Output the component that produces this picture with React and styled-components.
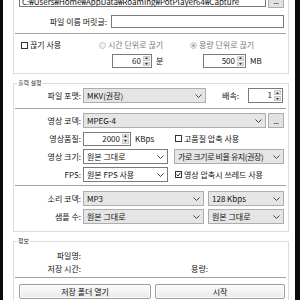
import React from 'react';
import styled, { createGlobalStyle } from 'styled-components';

const GlobalStyle = createGlobalStyle`
  *, *::before, *::after { box-sizing: border-box; }
  html, body { margin: 0; padding: 0; }
  body {
    width: 300px;
    height: 300px;
    overflow: hidden;
    background: #0b0b0b;
    font-family: "Noto Sans CJK KR", "Noto Sans", sans-serif;
    font-size: 8px;
    color: #111;
  }
`;

const Window = styled.div`
  margin-left: 3px;
  width: 292px;
  height: 300px;
  overflow: hidden;
  background: #fff;
  padding-left: 10px;
  display: flex;
  flex-direction: column;
  gap: 9px;
`;

const Group = styled.section`
  position: relative;
  flex: none;
  width: 276px;
  border: 1px solid #dcdcdc;
  padding: ${p => p.$pad};
  margin-top: ${p => p.$mt || 0}px;
  display: flex;
  flex-direction: column;
`;

const GroupTitle = styled.span`
  position: absolute;
  left: 3px;
  top: -6px;
  height: 10px;
  line-height: 10px;
  padding: 0 1px;
  background: #fff;
  font-size: 6px;
  color: #222;
`;

const Row = styled.div`
  flex: none;
  display: flex;
  align-items: center;
  height: ${p => p.$h || 15}px;
  margin-top: ${p => p.$mt || 0}px;
  padding-left: ${p => p.$pl || 0}px;
`;

const OptionGrid = styled.div`
  flex: none;
  display: grid;
  grid-template-columns: 78px 91px 1fr;
  align-items: center;
  height: ${p => p.$h}px;
  margin-top: ${p => p.$mt || 0}px;
  padding-left: 7px;
`;

const Cell = styled.div`
  grid-column: ${p => p.$col};
  display: flex;
  align-items: center;
`;

const Sep = styled.div`
  flex: none;
  height: 1px;
  background: #a0a0a0;
  margin: ${p => p.$mt}px 2px 0 1px;
`;

const Label = styled.span`
  flex: none;
  width: ${p => p.$w}px;
  padding-right: ${p => p.$pr ?? 2}px;
  text-align: right;
  white-space: nowrap;
  line-height: 12px;
`;

const Unit = styled.span`
  flex: none;
  width: ${p => (p.$w ? `${p.$w}px` : 'auto')};
  padding-left: ${p => p.$pl ?? 4}px;
  white-space: nowrap;
  line-height: 12px;
`;

const TextBox = styled.div`
  flex: none;
  width: ${p => p.$w}px;
  height: ${p => p.$h}px;
  border: 1px solid #7a7a7a;
  background: #fff;
  padding: ${p => p.$pt || 0}px 2px 0 2px;
  line-height: ${p => p.$h - 2}px;
  white-space: nowrap;
  overflow: hidden;
`;

const SmallButton = styled.div`
  flex: none;
  width: 16px;
  height: ${p => p.$h}px;
  margin-left: 2px;
  border: 1px solid #adadad;
  background: #e1e1e1;
  display: flex;
  align-items: flex-end;
  justify-content: center;
  font-size: 8px;
  line-height: 8px;
  padding-bottom: 2px;
  letter-spacing: -0.5px;
  color: #222;
`;

const ComboBox = styled.div`
  flex: none;
  display: flex;
  align-items: center;
  width: ${p => p.$w}px;
  height: 15px;
  margin-left: ${p => p.$ml || 0}px;
  border: 1px solid ${p => (p.$white ? '#7a7a7a' : '#adadad')};
  background: ${p => (p.$white ? '#fff' : '#e5e5e5')};
  padding: 0 3px;
`;

const ComboText = styled.span`
  flex: 1;
  min-width: 0;
  white-space: nowrap;
  overflow: hidden;
  line-height: 13px;
  letter-spacing: ${p => p.$ls || 0}px;
`;

const SpinBox = styled.div`
  flex: none;
  display: flex;
  width: ${p => p.$w}px;
  height: ${p => p.$h || 14}px;
  margin-left: ${p => p.$ml || 0}px;
  border: 1px solid #7a7a7a;
  background: #fff;
`;

const SpinValue = styled.span`
  flex: 1;
  text-align: right;
  padding-right: 2px;
  line-height: 12px;
  color: #222;
`;

const SpinArrows = styled.div`
  flex: none;
  width: 8px;
  display: flex;
  flex-direction: column;
  gap: 1px;
  padding: 1px 1px 1px 0;
`;

const SpinArrow = styled.span`
  flex: 1;
  background: #e3e3e3;
  border: 1px solid #c9c9c9;
  display: flex;
  align-items: center;
  justify-content: center;
`;

const CheckItem = styled.span`
  flex: none;
  display: flex;
  align-items: center;
  gap: 2px;
  margin-left: ${p => p.$ml || 0}px;
  white-space: nowrap;
  line-height: 10px;
  color: ${p => (p.$disabled ? '#7a7a7a' : '#111')};
`;

const CheckSquare = styled.span`
  flex: none;
  width: 7px;
  height: 7px;
  border: 1px solid #333;
  background: #fff;
  display: flex;
  align-items: center;
  justify-content: center;
`;

const RadioCircle = styled.span`
  flex: none;
  width: 7px;
  height: 7px;
  border-radius: 50%;
  border: 1px solid #c2c2c2;
  background: #f4f4f4;
  display: flex;
  align-items: center;
  justify-content: center;
  &::after {
    content: '';
    display: ${p => (p.$on ? 'block' : 'none')};
    width: 3px;
    height: 3px;
    border-radius: 50%;
    background: #a9a9a9;
  }
`;

const PushButton = styled.div`
  flex: none;
  width: ${p => p.$w}px;
  height: 15px;
  margin-left: ${p => p.$ml || 0}px;
  border: 1px solid #9c9c9c;
  border-radius: 2px;
  background: linear-gradient(#fbfbfb, #e9e9e9);
  box-shadow: inset 0 0 0 1px #fdfdfd;
  display: flex;
  align-items: center;
  justify-content: center;
  line-height: 13px;
  color: #111;
`;

const Chevron = () => (
  <svg width="7" height="4" viewBox="0 0 7 4">
    <path d="M0.5 0.5 L3.5 3.5 L6.5 0.5" fill="none" stroke="#444" strokeWidth="1" />
  </svg>
);

const Tri = ({ up }) => (
  <svg width="3" height="2" viewBox="0 0 3 2">
    <path d={up ? 'M0 2 L1.5 0 L3 2 Z' : 'M0 0 L1.5 2 L3 0 Z'} fill="#333" />
  </svg>
);

const Combo = ({ w, ml, white, ls, children }) => (
  <ComboBox $w={w} $ml={ml} $white={white}>
    <ComboText $ls={ls}>{children}</ComboText>
    <Chevron />
  </ComboBox>
);

const Spinner = ({ w, ml, h, children }) => (
  <SpinBox $w={w} $ml={ml} $h={h}>
    <SpinValue>{children}</SpinValue>
    <SpinArrows>
      <SpinArrow><Tri up /></SpinArrow>
      <SpinArrow><Tri /></SpinArrow>
    </SpinArrows>
  </SpinBox>
);

const CheckMark = () => (
  <svg width="5" height="5" viewBox="0 0 5 5">
    <path d="M0.5 2.5 L2 4 L4.5 0.8" fill="none" stroke="#222" strokeWidth="1" />
  </svg>
);

const Check = ({ checked, ml, children }) => (
  <CheckItem $ml={ml}>
    <CheckSquare>{checked && <CheckMark />}</CheckSquare>
    {children}
  </CheckItem>
);

const Radio = ({ on, children }) => (
  <CheckItem $disabled>
    <RadioCircle $on={on} />
    {children}
  </CheckItem>
);

export default function App() {
  return (
    <>
      <GlobalStyle />
      <Window>
        <Group $mt={-12} $pad="4px 0 5px 0">
          <Row $h={14} $pl={5}>
            <TextBox $w={247} $h={14} $pt={2}>C:₩Users₩Home₩AppData₩Roaming₩PotPlayer64₩Capture</TextBox>
            <SmallButton $h={15}>...</SmallButton>
          </Row>
          <Row $h={13} $mt={8} $pl={5}>
            <Label $w={92} $pr={4}>파일 이름 머릿글:</Label>
            <TextBox $w={173} $h={13} />
          </Row>
          <Sep $mt={5} />
          <OptionGrid $h={10} $mt={6}>
            <Cell $col={1}><Check>끊기 사용</Check></Cell>
            <Cell $col={2}><Radio>시간 단위로 끊기</Radio></Cell>
            <Cell $col={3}><Radio on>용량 단위로 끊기</Radio></Cell>
          </OptionGrid>
          <OptionGrid $h={14} $mt={4}>
            <Cell $col={2}><Spinner w={40} ml={13}>60</Spinner><Unit>분</Unit></Cell>
            <Cell $col={3}><Spinner w={43} ml={13}>500</Spinner><Unit>MB</Unit></Cell>
          </OptionGrid>
        </Group>

        <Group $pad="4px 0 7px 0">
          <GroupTitle>출력 설정</GroupTitle>
          <Row>
            <Label $w={69}>파일 포맷:</Label>
            <Combo w={123}>MKV(권장)</Combo>
            <Label $w={42} $pr={9}>배속:</Label>
            <Spinner w={35} h={15}>1</Spinner>
          </Row>
          <Sep $mt={5} />
          <Row $mt={4}>
            <Label $w={69}>영상 코덱:</Label>
            <Combo w={183}>MPEG-4</Combo>
            <SmallButton $h={15}>...</SmallButton>
          </Row>
          <Row $mt={3}>
            <Label $w={69}>영상품질:</Label>
            <Spinner w={48}>2000</Spinner>
            <Unit $w={44}>KBps</Unit>
            <Check>고품질 압축 사용</Check>
          </Row>
          <Row $mt={3}>
            <Label $w={69}>영상 크기:</Label>
            <Combo w={85} white>원본 그대로</Combo>
            <Combo w={110} ml={6} ls={-0.4}>가로 크기로 비율 유지(권장)</Combo>
          </Row>
          <Row $mt={3}>
            <Label $w={69}>FPS:</Label>
            <Combo w={85} white>원본 FPS 사용</Combo>
            <Check checked ml={7}>영상 압축시 쓰레드 사용</Check>
          </Row>
          <Sep $mt={3} />
          <Row $mt={5}>
            <Label $w={69}>소리 코덱:</Label>
            <Combo w={121}>MP3</Combo>
            <Combo w={76} ml={4}>128 Kbps</Combo>
          </Row>
          <Row $mt={3}>
            <Label $w={69}>샘플 수:</Label>
            <Combo w={121}>원본 그대로</Combo>
            <Combo w={76} ml={4}>원본 그대로</Combo>
          </Row>
        </Group>

        <Group $pad="7px 0 4px 0">
          <GroupTitle>정보</GroupTitle>
          <Row $h={13}>
            <Label $w={69}>파일명:</Label>
          </Row>
          <Row $h={13}>
            <Label $w={69}>저장 시간:</Label>
            <Label $w={126} $pr={1}>용량:</Label>
          </Row>
          <Sep $mt={2} />
          <Row $mt={6} $pl={5}>
            <PushButton $w={132}>저장 폴더 열기</PushButton>
            <PushButton $w={130} $ml={4}>시작</PushButton>
          </Row>
        </Group>
      </Window>
    </>
  );
}
